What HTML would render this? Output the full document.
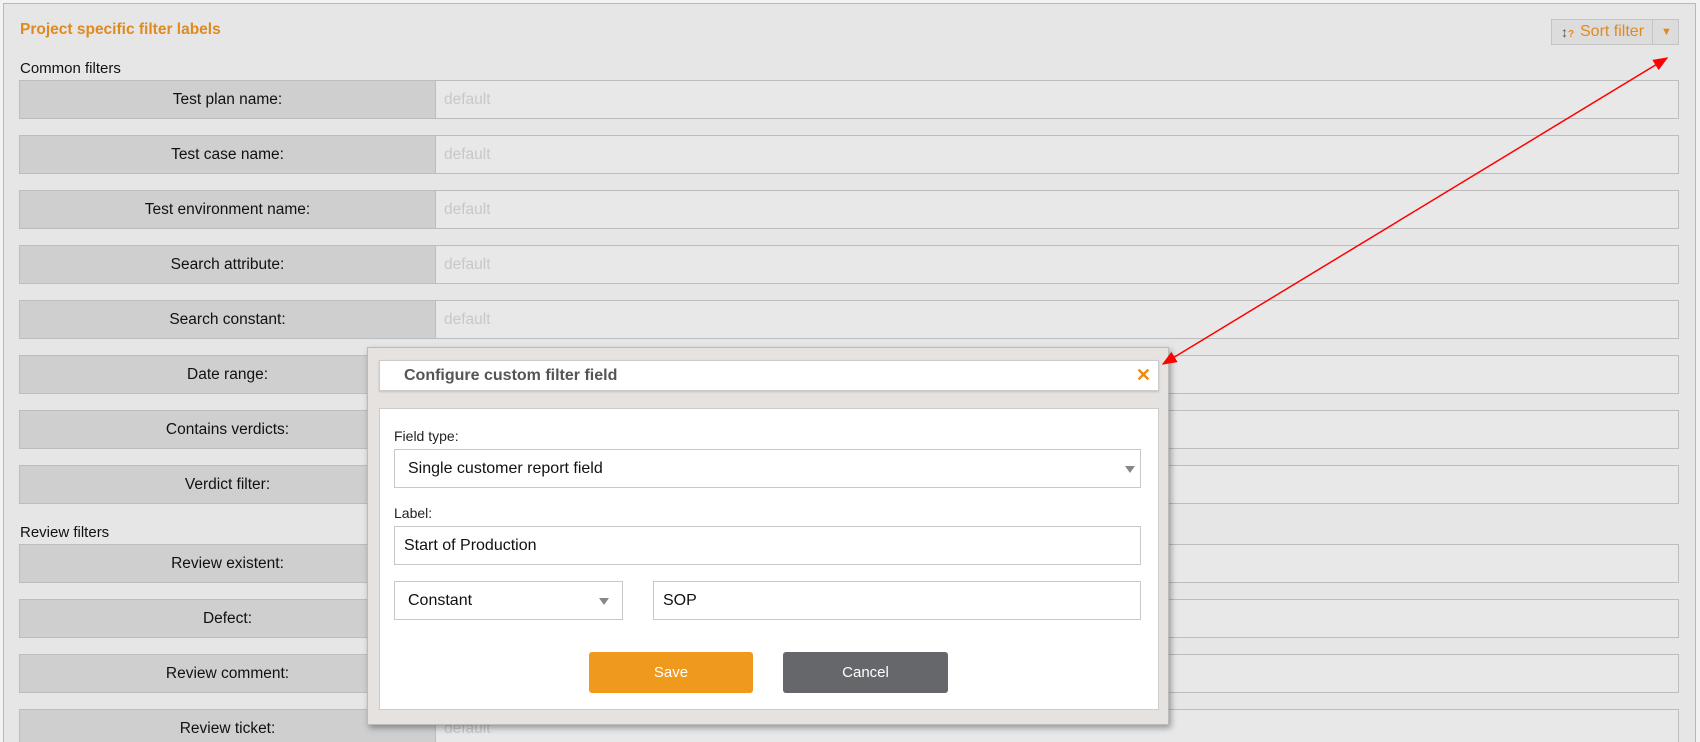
<!DOCTYPE html>
<html style="width:1700px;height:742px;overflow:hidden"><head><meta charset="utf-8"><style>
*{box-sizing:border-box;margin:0;padding:0}
body{width:1700px;height:742px;overflow:hidden;background:#f2f2f2;font-family:"Liberation Sans",Arial,sans-serif;position:relative}
.panel{position:absolute;left:3px;top:3px;width:1693px;height:739px;background:#e6e6e6;border:1px solid #b8b8b8;border-bottom:none}
.h{position:absolute;left:20px;top:21px;color:#e08a1e;font-weight:bold;font-size:15.5px}
.sec{position:absolute;left:20px;font-size:15px;color:#111}
.row{position:absolute;left:19px;width:1660px;height:39px;border:1px solid #bdbdbd;background:#e8e8e8}
.row .l{position:absolute;left:0;top:0;width:416px;height:37px;background:#cfcfcf;border-right:1px solid #bdbdbd;text-align:center;line-height:37px;font-size:15.5px;color:#111}
.row .v{position:absolute;left:424px;top:0;line-height:37px;font-size:15.5px;color:#c8c8c8}
.sort{position:absolute;left:1551px;top:19px;width:128px;height:26px;border:1px solid #c4c4c4;background:#dcdcdc;font-size:16px;color:#e08a1e;line-height:24px}
.sort .d{position:absolute;left:100px;top:0;width:1px;height:24px;background:#c4c4c4}
.modal{position:absolute;left:367px;top:347px;width:802px;height:378px;background:#e5e2e0;border:1px solid #bbb;box-shadow:2px 3px 6px rgba(0,0,0,.35)}
.mh{position:absolute;left:11px;top:12px;width:780px;height:31px;background:#fff;border:1px solid #ccc;box-shadow:0 1px 2px rgba(0,0,0,.15)}
.mh .t{position:absolute;left:24px;top:6px;font-weight:bold;font-size:16px;color:#555}
.mh .x{position:absolute;right:7px;top:4px;font-size:18px;color:#ee8a10;font-weight:bold}
.mb{position:absolute;left:11px;top:60px;width:780px;height:302px;background:#fff;border:1px solid #ccc}
.lab{position:absolute;font-size:14px;color:#222}
.inp{position:absolute;height:39px;border:1px solid #c8c8c8;background:#fff;font-size:16px;color:#111;line-height:37px}
.arr{position:absolute;width:0;height:0;border-left:5px solid transparent;border-right:5px solid transparent;border-top:7px solid #888}
.btn{position:absolute;height:41px;border-radius:3px;color:#fff;text-align:center;line-height:41px;font-size:15px}
</style></head><body>
<div class="panel"></div>
<div class="h">Project specific filter labels</div>
<div class="sort"><span style="position:absolute;left:9px;top:0;color:#555;font-weight:bold;font-size:14px">↕<span style="font-size:10px;color:#e08a1e">?</span></span><span style="position:absolute;left:28px">Sort filter</span><div class="d"></div><span style="position:absolute;left:109px;top:0;font-size:11px">▼</span></div>
<div class="sec" style="top:60px">Common filters</div>
<div class="row" style="top:80px"><div class="l">Test plan name:</div><div class="v">default</div></div>
<div class="row" style="top:135px"><div class="l">Test case name:</div><div class="v">default</div></div>
<div class="row" style="top:190px"><div class="l">Test environment name:</div><div class="v">default</div></div>
<div class="row" style="top:245px"><div class="l">Search attribute:</div><div class="v">default</div></div>
<div class="row" style="top:300px"><div class="l">Search constant:</div><div class="v">default</div></div>
<div class="row" style="top:355px"><div class="l">Date range:</div><div class="v">default</div></div>
<div class="row" style="top:410px"><div class="l">Contains verdicts:</div><div class="v">default</div></div>
<div class="row" style="top:465px"><div class="l">Verdict filter:</div><div class="v">default</div></div>
<div class="sec" style="top:524px">Review filters</div>
<div class="row" style="top:544px"><div class="l">Review existent:</div><div class="v">default</div></div>
<div class="row" style="top:599px"><div class="l">Defect:</div><div class="v">default</div></div>
<div class="row" style="top:654px"><div class="l">Review comment:</div><div class="v">default</div></div>
<div class="row" style="top:709px"><div class="l">Review ticket:</div><div class="v">default</div></div>

<div class="modal">
<div class="mh"><span class="t">Configure custom filter field</span><span class="x">✕</span></div>
<div class="mb"></div>
</div>
<div class="lab" style="left:394px;top:428px">Field type:</div>
<div class="inp" style="left:394px;top:449px;width:747px;padding-left:13px">Single customer report field<span class="arr" style="left:730px;top:16px"></span></div>
<div class="lab" style="left:394px;top:505px">Label:</div>
<div class="inp" style="left:394px;top:526px;width:747px;padding-left:9px">Start of Production</div>
<div class="inp" style="left:394px;top:581px;width:229px;padding-left:13px">Constant<span class="arr" style="left:204px;top:16px"></span></div>
<div class="inp" style="left:653px;top:581px;width:488px;padding-left:9px">SOP</div>
<div class="btn" style="left:589px;top:652px;width:164px;background:#ef991d">Save</div>
<div class="btn" style="left:783px;top:652px;width:165px;background:#65676a">Cancel</div>

<svg width="1700" height="742" style="position:absolute;left:0;top:0">
<defs><marker id="m" markerWidth="10" markerHeight="8" refX="9" refY="4" orient="auto"><path d="M0,0 L10,4 L0,8 z" fill="#f00"/></marker></defs>
<line x1="1415" y1="211" x2="1667" y2="58" stroke="#f00" stroke-width="1.5" marker-end="url(#m)"/>
<line x1="1415" y1="211" x2="1163" y2="364" stroke="#f00" stroke-width="1.5" marker-end="url(#m)"/>
</svg>
</body></html>
